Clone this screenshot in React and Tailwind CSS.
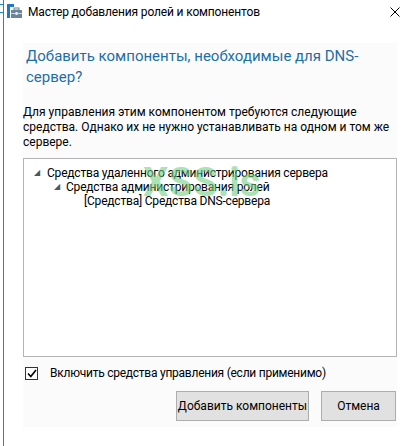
export default function App() {
  const font = { fontFamily: 'Roboto, "Noto Sans", sans-serif' };
  return (
    <div className="w-[408px] h-[446px] bg-white relative overflow-hidden text-[#000]" style={font}>
      <div className="absolute left-0 top-[4px] w-[3px] h-px bg-[#1883d7]" />
      <div className="absolute left-0 top-[12px] w-[3px] h-px bg-[#1883d7]" />
      <div className="flex h-full pl-[3px]">
        <div className="w-px h-full bg-[#1883d7]" />
        <div className="flex-1 flex flex-col">
          {/* title bar */}
          <div className="h-[23px] flex items-center pl-[3px] pr-[8px]">
            <svg width="15" height="15" viewBox="0 0 15 15" className="mr-[6px] mt-[-1px]">
              <rect x="0" y="0" width="3" height="14" fill="#1f78c8" />
              <rect x="0" y="0" width="7" height="3" fill="#1f78c8" />
              <rect x="4" y="6" width="11" height="8" fill="#6b8497" />
              <rect x="7" y="4" width="5" height="2" fill="none" stroke="#6b8497" strokeWidth="1" />
              <rect x="4" y="9" width="11" height="1" fill="#c9d5df" />
              <rect x="8.5" y="8" width="2" height="3" fill="#e8eef3" />
            </svg>
            <span className="text-[12px] leading-none text-black whitespace-nowrap tracking-[-0.15px]">Мастер добавления ролей и компонентов</span>
            <div className="flex-1" />
            <svg width="10" height="10" viewBox="0 0 10 10">
              <path d="M0.5 0.5 L9.5 9.5 M9.5 0.5 L0.5 9.5" stroke="#000" strokeWidth="1" />
            </svg>
          </div>
          {/* content panel */}
          <div className="mt-[20px] ml-[19px] w-[374px] h-[384px] bg-[#fbfbfb] flex flex-col">
            <div className="pl-[3px] pt-[3px] text-[15px] leading-[21px] text-[#1e6ea8] whitespace-nowrap">
              Добавить компоненты, необходимые для DNS-
              <br />
              сервер?
            </div>
            <div className="mt-[17px] text-[12px] leading-[15px] whitespace-nowrap">
              Для управления этим компонентом требуются следующие
              <br />
              средства. Однако их не нужно устанавливать на одном и том же
              <br />
              сервере.
            </div>
            <div className="mt-[8px] h-[199px] border border-[#b4b4b4] bg-white relative pt-[7px] text-[12px] leading-[14px] tracking-[-0.2px]">
              <div className="flex items-center pl-[10px]">
                <span className="text-[8px] text-[#555] w-[13px]">◢</span>
                <span>Средства удаленного администрирования сервера</span>
              </div>
              <div className="flex items-center pl-[30px]">
                <span className="text-[8px] text-[#555] w-[12px]">◢</span>
                <span>Средства администрирования ролей</span>
              </div>
              <div className="flex items-center pl-[60px]">
                <span>[Средства] Средства DNS-сервера</span>
              </div>
              <div className="absolute left-[119px] top-[4px] text-[40px] font-bold leading-none tracking-normal text-[#74d086] opacity-60 pointer-events-none">
                XSS.is
              </div>
            </div>
            <div className="mt-[9px] flex items-center h-[14px]">
              <div className="ml-[2px] w-[13px] h-[13px] border border-[#333] bg-white flex items-center justify-center">
                <svg width="10" height="9" viewBox="0 0 10 9">
                  <path d="M1 4.5 L3.8 7.5 L9 1" stroke="#000" strokeWidth="1.6" fill="none" />
                </svg>
              </div>
              <span className="ml-[12px] text-[12px] leading-none whitespace-nowrap tracking-[-0.25px]">Включить средства управления (если применимо)</span>
            </div>
            <div className="mt-[11px] flex justify-end gap-[12px] pr-[1px]">
              <button className="w-[133px] h-[30px] bg-[#e1e1e1] border border-[#adadad] text-[12px] whitespace-nowrap">Добавить компоненты</button>
              <button className="w-[75px] h-[30px] bg-[#e1e1e1] border border-[#adadad] text-[12px]">Отмена</button>
            </div>
          </div>
        </div>
      </div>
    </div>
  );
}
